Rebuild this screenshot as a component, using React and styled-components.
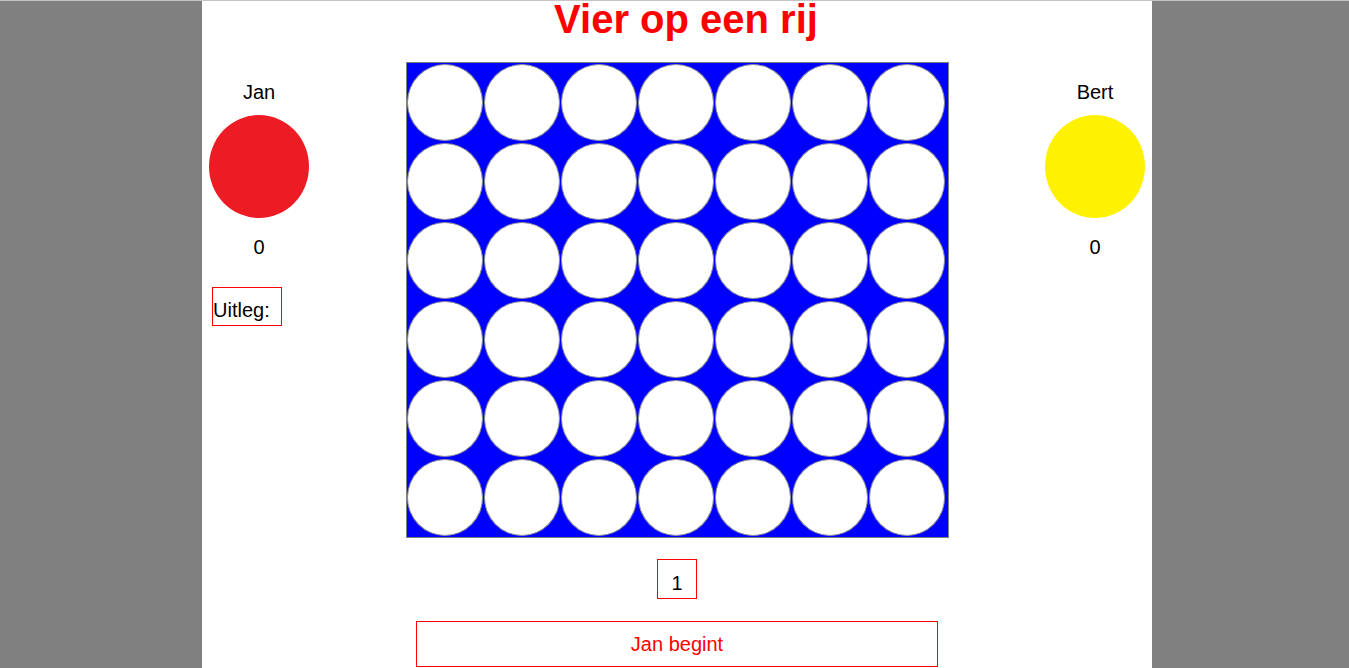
import React from 'react'
import styled, { createGlobalStyle } from 'styled-components'

const GlobalStyle = createGlobalStyle`
  html, body {
    margin: 0;
    padding: 0;
  }
  body {
    background: #808080;
    border-top: 1px solid #c4c4c4;
    font-family: "Liberation Sans", Arial, sans-serif;
  }
`

const Page = styled.div`
  width: 950px;
  margin-left: 202px;
  min-height: calc(100vh - 1px);
  background: #fff;
`

const Title = styled.h1`
  margin: 0;
  padding-left: 18px;
  font-size: 40px;
  line-height: 36px;
  font-weight: bold;
  color: #ff0000;
  text-align: center;
`

const Main = styled.div`
  display: grid;
  grid-template-columns: 100px 1fr 100px;
  padding: 25px 7px 0;
  align-items: start;
`

const Player = styled.div`
  display: flex;
  flex-direction: column;
  align-items: center;
  padding-top: 19px;
  font-size: 20px;
  line-height: 23px;
  color: #000;
`

const Disc = styled.div`
  width: 100px;
  height: 103px;
  border-radius: 50%;
  background: ${p => p.$color};
  margin: 11px 0 18px;
`

const Explain = styled.div`
  align-self: flex-start;
  margin: 28px 0 0 3px;
  width: 70px;
  height: 39px;
  box-sizing: border-box;
  border: 1px solid #ff0000;
  padding-top: 11px;
`

const Center = styled.div`
  display: flex;
  flex-direction: column;
  align-items: center;
`

const Board = styled.div`
  width: 541px;
  height: 474px;
  border: 1px solid #808080;
  background: #0000ff;
  display: grid;
  grid-template-columns: repeat(7, 77px);
  grid-template-rows: repeat(6, 79px);
  place-items: center;
`

const Hole = styled.div`
  width: 74px;
  height: 75px;
  border-radius: 50%;
  background: #fff;
  border: 1px solid #8a8a9a;
`

const Turn = styled.div`
  margin-top: 21px;
  width: 40px;
  height: 40px;
  box-sizing: border-box;
  border: 1px solid #ff0000;
  padding-top: 12px;
  text-align: center;
  font-size: 20px;
  line-height: 23px;
`

const Status = styled.div`
  margin-top: 22px;
  width: 522px;
  height: 46px;
  box-sizing: border-box;
  border: 1px solid #ff0000;
  padding-top: 11px;
  text-align: center;
  font-size: 20px;
  line-height: 23px;
  color: #ff0000;
`

const App = () => {
  const holes = Array.from({ length: 42 }, (_, i) => i)
  return (
    <Page>
      <GlobalStyle />
      <Title>Vier op een rij</Title>
      <Main>
        <Player>
          <div>Jan</div>
          <Disc $color="#ed1c24" />
          <div>0</div>
          <Explain>Uitleg:</Explain>
        </Player>
        <Center>
          <Board>
            {holes.map(i => <Hole key={i} />)}
          </Board>
          <Turn>1</Turn>
          <Status>Jan begint</Status>
        </Center>
        <Player>
          <div>Bert</div>
          <Disc $color="#fff200" />
          <div>0</div>
        </Player>
      </Main>
    </Page>
  )
}

export default App
